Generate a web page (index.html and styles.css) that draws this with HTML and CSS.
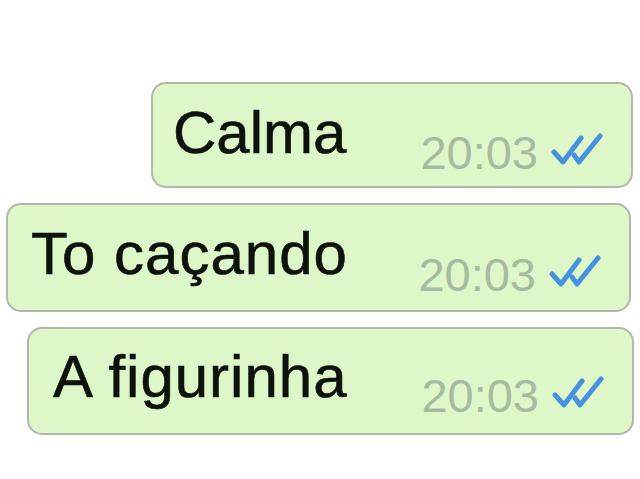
FILE: index.html
```html
<!DOCTYPE html>
<html lang="pt">
<head>
<meta charset="utf-8">
<title>Chat</title>
<link rel="stylesheet" href="styles.css">
</head>
<body>
<div class="chat">
  <div class="bubble b1">
    <span class="text">Calma</span>
    <span class="meta"><span class="time">20:03</span><svg class="ticks" viewBox="0 0 52 32" width="52" height="32"><path d="M3 19 L12 29 L30 5" /><path d="M23 22 L28 29 L49 3" /></svg></span>
  </div>
  <div class="bubble b2">
    <span class="text">To caçando</span>
    <span class="meta"><span class="time">20:03</span><svg class="ticks" viewBox="0 0 52 32" width="52" height="32"><path d="M3 19 L12 29 L30 5" /><path d="M23 22 L28 29 L49 3" /></svg></span>
  </div>
  <div class="bubble b3">
    <span class="text">A figurinha</span>
    <span class="meta"><span class="time">20:03</span><svg class="ticks" viewBox="0 0 52 32" width="52" height="32"><path d="M3 19 L12 29 L30 5" /><path d="M23 22 L28 29 L49 3" /></svg></span>
  </div>
</div>
</body>
</html>
```
FILE: styles.css
```css
html, body {
  margin: 0;
  padding: 0;
  background: #ffffff;
}
body {
  width: 640px;
  height: 479px;
  overflow: hidden;
  font-family: "Liberation Sans", Arial, sans-serif;
}
.chat {
  display: flex;
  flex-direction: column;
  gap: 15px;
  padding-top: 82px;
}
.bubble {
  box-sizing: border-box;
  display: flex;
  align-items: flex-start;
  background: #def7c9;
  border: 2px solid #b2b7ab;
  border-radius: 15px;
  padding: 15px 28px 0 22px;
}
.b1 { margin-left: 151px; width: 482px; height: 106px; padding-left: 20px; }
.b2 { margin-left: 6px; width: 625px; height: 109px; padding-left: 23px; }
.b3 { margin-left: 27px; width: 607px; height: 108px; padding-top: 14px; padding-left: 24px; }
.text {
  font-size: 60px;
  line-height: 67px;
  color: #0d130c;
  -webkit-text-stroke: 0.6px #0d130c;
  white-space: nowrap;
}
.b2 .text, .b3 .text { letter-spacing: 1px; }
.meta {
  margin-left: auto;
  margin-top: 28px;
  display: flex;
  align-items: flex-start;
  gap: 13px;
}
.b2 .meta { margin-top: 29px; }
.b3 .meta { margin-top: 27px; }
.time {
  font-size: 47px;
  line-height: 52px;
  color: #a7bb9f;
}
.ticks {
  display: block;
  margin-top: 6px;
}
.ticks path {
  fill: none;
  stroke: #4692df;
  stroke-width: 5;
  stroke-linecap: round;
  stroke-linejoin: round;
}
```
